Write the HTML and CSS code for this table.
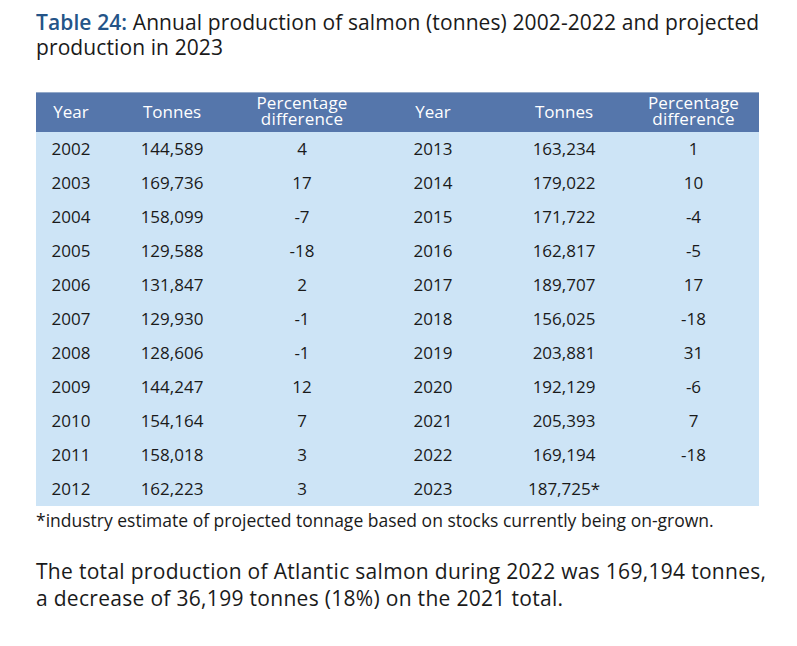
FILE: index.html
```html
<!DOCTYPE html>
<html lang="en">
<head>
<meta charset="utf-8">
<title>Annual production of salmon</title>
<link rel="stylesheet" href="styles.css">
</head>
<body>
<main class="page">
  <h1 class="caption"><span class="caption-label">Table 24:</span> Annual production of salmon (tonnes) 2002-2022 and projected production in 2023</h1>
  <table class="data">
    <colgroup>
      <col class="c-year"><col class="c-tonnes"><col class="c-pct">
      <col class="c-year2"><col class="c-tonnes2"><col class="c-pct2">
    </colgroup>
    <thead>
      <tr>
        <th class="h-single">Year</th>
        <th class="h-single">Tonnes</th>
        <th class="h-double">Percentage<br>difference</th>
        <th class="h-single">Year</th>
        <th class="h-single">Tonnes</th>
        <th class="h-double">Percentage<br>difference</th>
      </tr>
    </thead>
    <tbody>
      <tr><td>2002</td><td>144,589</td><td>4</td><td>2013</td><td>163,234</td><td>1</td></tr>
      <tr><td>2003</td><td>169,736</td><td>17</td><td>2014</td><td>179,022</td><td>10</td></tr>
      <tr><td>2004</td><td>158,099</td><td>-7</td><td>2015</td><td>171,722</td><td>-4</td></tr>
      <tr><td>2005</td><td>129,588</td><td>-18</td><td>2016</td><td>162,817</td><td>-5</td></tr>
      <tr><td>2006</td><td>131,847</td><td>2</td><td>2017</td><td>189,707</td><td>17</td></tr>
      <tr><td>2007</td><td>129,930</td><td>-1</td><td>2018</td><td>156,025</td><td>-18</td></tr>
      <tr><td>2008</td><td>128,606</td><td>-1</td><td>2019</td><td>203,881</td><td>31</td></tr>
      <tr><td>2009</td><td>144,247</td><td>12</td><td>2020</td><td>192,129</td><td>-6</td></tr>
      <tr><td>2010</td><td>154,164</td><td>7</td><td>2021</td><td>205,393</td><td>7</td></tr>
      <tr><td>2011</td><td>158,018</td><td>3</td><td>2022</td><td>169,194</td><td>-18</td></tr>
      <tr><td>2012</td><td>162,223</td><td>3</td><td>2023</td><td>187,725*</td><td></td></tr>
    </tbody>
  </table>
  <p class="footnote">*industry estimate of projected tonnage based on stocks currently being on-grown.</p>
  <p class="summary">The total production of Atlantic salmon during 2022 was 169,194 tonnes, a decrease of 36,199 tonnes (18%) on the 2021 total.</p>
</main>
</body>
</html>
```

FILE: styles.css
```css
html, body {
  margin: 0;
  padding: 0;
  background: #ffffff;
}

.page {
  width: 740px;
  padding: 10px 0 0 36px;
  font-family: "Open Sans", "Noto Sans", sans-serif;
  color: #1a1a1a;
}

.caption {
  margin: 0;
  font-size: 21px;
  font-weight: 400;
  line-height: 25px;
  letter-spacing: 0.1px;
  color: #1a1a1a;
}

.caption-label {
  color: #245488;
  font-weight: 600;
}

.data {
  margin-top: 32px;
  width: 723px;
  border-collapse: collapse;
  table-layout: fixed;
  background: #cde4f6;
  font-size: 17px;
  color: #1a1a1a;
}

.c-year { width: 70px; }
.c-tonnes { width: 132px; }
.c-pct { width: 128px; }
.c-year2 { width: 134px; }
.c-tonnes2 { width: 128px; }
.c-pct2 { width: 131px; }

.data th {
  height: 40px;
  padding: 0;
  background: #5576ab;
  box-shadow: inset 0 1px 0 #93a9c9;
  color: #ffffff;
  font-weight: 400;
  text-align: center;
  vertical-align: middle;
}

.h-single {
  font-size: 17px;
  line-height: 20px;
}

.data .h-double {
  height: 37px;
  padding-bottom: 3px;
  font-size: 17px;
  line-height: 16px;
  letter-spacing: 0.2px;
}

.data td {
  height: 34px;
  padding: 0;
  text-align: center;
  vertical-align: middle;
  line-height: 20px;
}

.footnote {
  margin: 4px 0 0;
  font-size: 17.5px;
  line-height: 20px;
}

.summary {
  margin: 28px 0 0;
  font-size: 21px;
  line-height: 27px;
  letter-spacing: 0.3px;
}
```
